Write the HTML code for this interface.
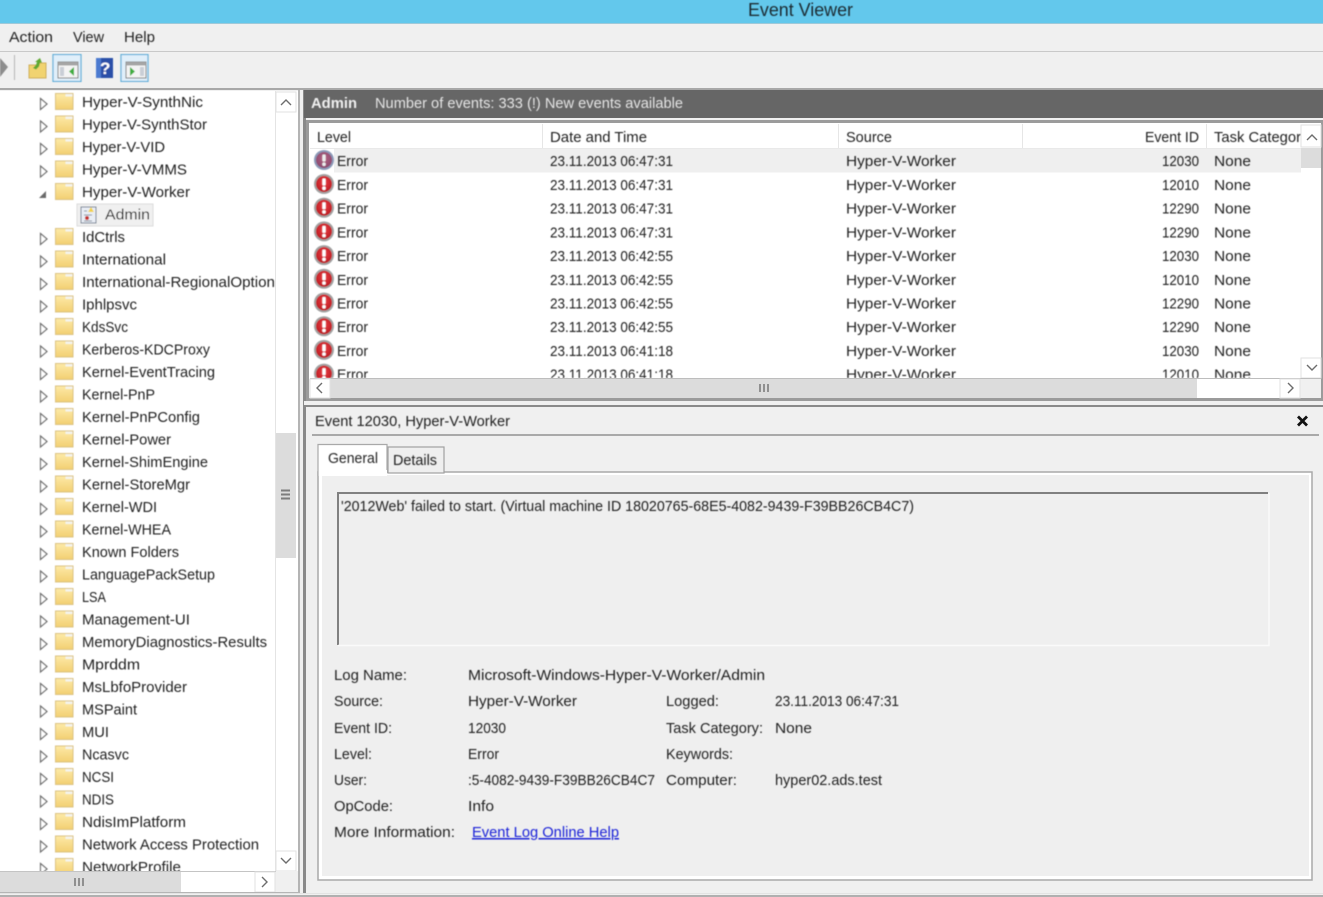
<!DOCTYPE html>
<html><head><meta charset="utf-8"><title>Event Viewer</title>
<style>
html,body{margin:0;padding:0;width:1323px;height:897px;overflow:hidden;background:#f0f0f0}
svg{display:block}
text{font-family:"Liberation Sans",sans-serif;font-size:15px;fill:#222;dominant-baseline:auto}
.b{filter:url(#soft)}
</style></head><body>
<svg width="1323" height="897" viewBox="0 0 1323 897" xmlns="http://www.w3.org/2000/svg">
<defs>
<filter id="soft" x="-2%" y="-2%" width="104%" height="104%"><feGaussianBlur stdDeviation="0.4"/></filter>
<linearGradient id="fg" x1="0" y1="0" x2="0" y2="1"><stop offset="0" stop-color="#fdeaa8"/><stop offset="1" stop-color="#f2cf72"/></linearGradient>
<radialGradient id="er" cx=".5" cy=".4" r=".6"><stop offset="0" stop-color="#ea3c42"/><stop offset="1" stop-color="#bb1c22"/></radialGradient>
<radialGradient id="er2" cx=".5" cy=".4" r=".6"><stop offset="0" stop-color="#b5607f"/><stop offset="1" stop-color="#8a4a70"/></radialGradient>
<g id="folder"><rect x="0.500" y="0.500" width="17.500" height="16" fill="url(#fg)" stroke="#dcc281"/><rect x="10.500" y="1" width="7" height="2.500" fill="#f4f4ee"/></g>
<path id="tri" d="M0.500 0.500L7 6l-6.500 5.500z" fill="#fff" stroke="#6d6d6d" stroke-width="1.200"/>
<g id="err"><circle cx="0" cy="0" r="10" fill="#a2a2a2"/><circle cx="0" cy="0" r="8" fill="url(#er)"/><rect x="-1.700" y="-5.500" width="3.400" height="7" rx="1" fill="#fff"/><circle cx="0" cy="4.200" r="1.800" fill="#fff"/></g>
<clipPath id="treeclip"><rect x="0" y="91" width="275" height="780"/></clipPath>
<clipPath id="listclip"><rect x="310" y="124" width="991" height="254"/></clipPath>
</defs>

<!-- chrome -->
<rect width="1323" height="897" fill="#f0f0f0"/>
<rect width="1323" height="23" fill="#63c8ec"/>
<rect y="23" width="1323" height="1" fill="#9fc9d9"/>
<rect y="51" width="1323" height="1" fill="#c9c9c9"/>
<rect y="88" width="1323" height="2" fill="#a8a8a8"/>

<!-- toolbar -->
<g class="b">
<path d="M0 58l8 9-8 10z" fill="#8d8d8d"/>
<rect x="14" y="55" width="1" height="25" fill="#b5b5b5"/>
<path d="M29 65h8l2-2h7v15H29z" fill="#f1d36f" stroke="#cfae5c"/>
<path d="M33 68l3-3 1-3-2 0 5-4 2 5-2-0.500-1 4-3 3z" fill="#5ea832"/>
<rect x="53" y="54.500" width="28" height="27" fill="#e0effa" stroke="#5eaed9" stroke-width="1.200"/>
<rect x="58" y="62" width="20" height="16" fill="#f4f4f4" stroke="#7b7b7b"/><rect x="58" y="62" width="20" height="3.500" fill="#a5a5a5"/>
<rect x="60" y="67" width="4" height="9" fill="#c9ced6"/><path d="M74 67v9l-5-4.500z" fill="#3fae3f"/>
<rect x="96" y="58" width="17" height="20" fill="#2b4fa8"/><rect x="96" y="58" width="5" height="20" fill="#4c7ad0"/>
<text x="100" y="74" style="font-size:17px;font-weight:bold;fill:#fff">?</text>
<rect x="121" y="54.500" width="27" height="27" fill="#e0effa" stroke="#5eaed9" stroke-width="1.200"/>
<rect x="126" y="62" width="20" height="16" fill="#f4f4f4" stroke="#7b7b7b"/><rect x="126" y="62" width="20" height="3.500" fill="#a5a5a5"/>
<rect x="140" y="67" width="4" height="9" fill="#c9ced6"/><path d="M130 67v9l5-4.500z" fill="#3fae3f"/>
</g>

<!-- tree panel -->
<rect x="0" y="91" width="298" height="802" fill="#fff"/>
<rect x="298" y="90" width="2" height="803" fill="#b4b4b4"/>
<rect x="303" y="90" width="3" height="803" fill="#8a8a8a"/>
<rect x="275" y="91" width="1" height="780" fill="#e4e4e4"/>
<rect x="276" y="92" width="20" height="20" fill="#fff" stroke="#e2e2e2"/>
<path d="M281 105l5-5 5 5" fill="none" stroke="#6d6d6d" stroke-width="1.400"/>
<rect x="276" y="433" width="20" height="125" fill="#dcdcdc"/>
<path d="M281 490.500h9M281 494.500h9M281 498.500h9" stroke="#7d7d7d" stroke-width="2"/>
<rect x="276" y="851" width="20" height="20" fill="#fff" stroke="#e2e2e2"/>
<path d="M281 858l5 5 5-5" fill="none" stroke="#6d6d6d" stroke-width="1.400"/>
<rect x="0" y="871" width="298" height="21" fill="#f0f0f0"/>
<rect x="0" y="871" width="276" height="1" fill="#c4c4c4"/>
<rect x="0" y="872" width="181" height="20" fill="#dcdcdc"/>
<rect x="181" y="872" width="74" height="20" fill="#fff"/>
<rect x="255" y="872" width="20" height="20" fill="#fff" stroke="#e2e2e2"/>
<path d="M262 877l5 5-5 5" fill="none" stroke="#6d6d6d" stroke-width="1.400"/>
<path d="M75 878v8M79 878v8M83 878v8" stroke="#7d7d7d" stroke-width="1.600"/>
<rect x="0" y="892" width="298" height="1" fill="#b5b5b5"/>

<g clip-path="url(#treeclip)">
<g class="b">
<rect x="77" y="204" width="76" height="22" fill="#f0f0f0" stroke="#dcdcdc"/>
<g>
<use href="#tri" x="40" y="98"/><use href="#folder" x="55" y="93"/>
<use href="#tri" x="40" y="120.500"/><use href="#folder" x="55" y="115.500"/>
<use href="#tri" x="40" y="143"/><use href="#folder" x="55" y="138"/>
<use href="#tri" x="40" y="165.500"/><use href="#folder" x="55" y="160.500"/>
<path d="M39 198l7-7v7z" fill="#6a6a6a"/><use href="#folder" x="55" y="183"/>
<rect x="81" y="207" width="15" height="16" fill="#e9eef5" stroke="#6f7e92"/><path d="M91 207l-3 5h6z" fill="#f2d24c"/><circle cx="87" cy="218" r="2" fill="#c5332f"/><path d="M84 211h3M84 215h8M84 221h8" stroke="#8a94a3"/>
<use href="#tri" x="40" y="233"/><use href="#folder" x="55" y="228"/>
<use href="#tri" x="40" y="255.500"/><use href="#folder" x="55" y="250.500"/>
<use href="#tri" x="40" y="278"/><use href="#folder" x="55" y="273"/>
<use href="#tri" x="40" y="300.500"/><use href="#folder" x="55" y="295.500"/>
<use href="#tri" x="40" y="323"/><use href="#folder" x="55" y="318"/>
<use href="#tri" x="40" y="345.500"/><use href="#folder" x="55" y="340.500"/>
<use href="#tri" x="40" y="368"/><use href="#folder" x="55" y="363"/>
<use href="#tri" x="40" y="390.500"/><use href="#folder" x="55" y="385.500"/>
<use href="#tri" x="40" y="413"/><use href="#folder" x="55" y="408"/>
<use href="#tri" x="40" y="435.500"/><use href="#folder" x="55" y="430.500"/>
<use href="#tri" x="40" y="458"/><use href="#folder" x="55" y="453"/>
<use href="#tri" x="40" y="480.500"/><use href="#folder" x="55" y="475.500"/>
<use href="#tri" x="40" y="503"/><use href="#folder" x="55" y="498"/>
<use href="#tri" x="40" y="525.500"/><use href="#folder" x="55" y="520.500"/>
<use href="#tri" x="40" y="548"/><use href="#folder" x="55" y="543"/>
<use href="#tri" x="40" y="570.500"/><use href="#folder" x="55" y="565.500"/>
<use href="#tri" x="40" y="593"/><use href="#folder" x="55" y="588"/>
<use href="#tri" x="40" y="615.500"/><use href="#folder" x="55" y="610.500"/>
<use href="#tri" x="40" y="638"/><use href="#folder" x="55" y="633"/>
<use href="#tri" x="40" y="660.500"/><use href="#folder" x="55" y="655.500"/>
<use href="#tri" x="40" y="683"/><use href="#folder" x="55" y="678"/>
<use href="#tri" x="40" y="705.500"/><use href="#folder" x="55" y="700.500"/>
<use href="#tri" x="40" y="728"/><use href="#folder" x="55" y="723"/>
<use href="#tri" x="40" y="750.500"/><use href="#folder" x="55" y="745.500"/>
<use href="#tri" x="40" y="773"/><use href="#folder" x="55" y="768"/>
<use href="#tri" x="40" y="795.500"/><use href="#folder" x="55" y="790.500"/>
<use href="#tri" x="40" y="818"/><use href="#folder" x="55" y="813"/>
<use href="#tri" x="40" y="840.500"/><use href="#folder" x="55" y="835.500"/>
<use href="#tri" x="40" y="863"/><use href="#folder" x="55" y="858"/>
</g>
<text x="82" y="107" textLength="121" lengthAdjust="spacingAndGlyphs">Hyper-V-SynthNic</text>
<text x="82" y="129.500" textLength="125" lengthAdjust="spacingAndGlyphs">Hyper-V-SynthStor</text>
<text x="82" y="152" textLength="83" lengthAdjust="spacingAndGlyphs">Hyper-V-VID</text>
<text x="82" y="174.500" textLength="105" lengthAdjust="spacingAndGlyphs">Hyper-V-VMMS</text>
<text x="82" y="197" textLength="108" lengthAdjust="spacingAndGlyphs">Hyper-V-Worker</text>
<text x="105" y="219.500" textLength="45" lengthAdjust="spacingAndGlyphs">Admin</text>
<text x="82" y="242" textLength="43" lengthAdjust="spacingAndGlyphs">IdCtrls</text>
<text x="82" y="264.500" textLength="84" lengthAdjust="spacingAndGlyphs">International</text>
<text x="82" y="287" textLength="193" lengthAdjust="spacingAndGlyphs">International-RegionalOption</text>
<text x="82" y="309.500" textLength="55" lengthAdjust="spacingAndGlyphs">Iphlpsvc</text>
<text x="82" y="332" textLength="46" lengthAdjust="spacingAndGlyphs">KdsSvc</text>
<text x="82" y="354.500" textLength="128" lengthAdjust="spacingAndGlyphs">Kerberos-KDCProxy</text>
<text x="82" y="377" textLength="133" lengthAdjust="spacingAndGlyphs">Kernel-EventTracing</text>
<text x="82" y="399.500" textLength="73" lengthAdjust="spacingAndGlyphs">Kernel-PnP</text>
<text x="82" y="422" textLength="118" lengthAdjust="spacingAndGlyphs">Kernel-PnPConfig</text>
<text x="82" y="444.500" textLength="89" lengthAdjust="spacingAndGlyphs">Kernel-Power</text>
<text x="82" y="467" textLength="126" lengthAdjust="spacingAndGlyphs">Kernel-ShimEngine</text>
<text x="82" y="489.500" textLength="108" lengthAdjust="spacingAndGlyphs">Kernel-StoreMgr</text>
<text x="82" y="512" textLength="75" lengthAdjust="spacingAndGlyphs">Kernel-WDI</text>
<text x="82" y="534.500" textLength="89" lengthAdjust="spacingAndGlyphs">Kernel-WHEA</text>
<text x="82" y="557" textLength="97" lengthAdjust="spacingAndGlyphs">Known Folders</text>
<text x="82" y="579.500" textLength="133" lengthAdjust="spacingAndGlyphs">LanguagePackSetup</text>
<text x="82" y="602" textLength="24" lengthAdjust="spacingAndGlyphs">LSA</text>
<text x="82" y="624.500" textLength="108" lengthAdjust="spacingAndGlyphs">Management-UI</text>
<text x="82" y="647" textLength="185" lengthAdjust="spacingAndGlyphs">MemoryDiagnostics-Results</text>
<text x="82" y="669.500" textLength="58" lengthAdjust="spacingAndGlyphs">Mprddm</text>
<text x="82" y="692" textLength="105" lengthAdjust="spacingAndGlyphs">MsLbfoProvider</text>
<text x="82" y="714.500" textLength="55" lengthAdjust="spacingAndGlyphs">MSPaint</text>
<text x="82" y="737" textLength="27" lengthAdjust="spacingAndGlyphs">MUI</text>
<text x="82" y="759.500" textLength="47" lengthAdjust="spacingAndGlyphs">Ncasvc</text>
<text x="82" y="782" textLength="32" lengthAdjust="spacingAndGlyphs">NCSI</text>
<text x="82" y="804.500" textLength="32" lengthAdjust="spacingAndGlyphs">NDIS</text>
<text x="82" y="827" textLength="104" lengthAdjust="spacingAndGlyphs">NdisImPlatform</text>
<text x="82" y="849.500" textLength="177" lengthAdjust="spacingAndGlyphs">Network Access Protection</text>
<text x="82" y="872" textLength="99" lengthAdjust="spacingAndGlyphs">NetworkProfile</text>
</g></g>

<!-- dark header -->
<rect x="304" y="90" width="1019" height="28" fill="#666"/>
<g class="b">
<text x="311" y="108" textLength="46" lengthAdjust="spacingAndGlyphs" style="font-weight:bold;fill:#f0f0f0">Admin</text>
<text x="375" y="108" textLength="308" lengthAdjust="spacingAndGlyphs" style="fill:#e4e4e4">Number of events: 333 (!) New events available</text>
</g>

<!-- event list -->
<rect x="306" y="120" width="1017" height="281" fill="#9b9b9b"/>
<rect x="309" y="123" width="1012" height="275" fill="#fff"/>
<path d="M542.500 124v24M838.500 124v24M1022.500 124v24M1206.500 124v24" stroke="#e6e6e6"/>
<rect x="310" y="148" width="991" height="1" fill="#e9e9e9"/>
<rect x="334" y="149" width="967" height="23.500" fill="#efefef"/>
<g class="b">
<text x="317" y="142" textLength="34" lengthAdjust="spacingAndGlyphs">Level</text>
<text x="550" y="142" textLength="97" lengthAdjust="spacingAndGlyphs">Date and Time</text>
<text x="846" y="142" textLength="46" lengthAdjust="spacingAndGlyphs">Source</text>
<text x="1145" y="142" textLength="54" lengthAdjust="spacingAndGlyphs">Event ID</text>
<text x="1214" y="142" textLength="87" lengthAdjust="spacingAndGlyphs">Task Categor</text>
<g clip-path="url(#listclip)">
<g><circle cx="324" cy="160" r="10" fill="#8b9ab8"/><circle cx="324" cy="160" r="8" fill="url(#er2)"/><rect x="322.300" y="154.500" width="3.400" height="7" rx="1" fill="#eee"/><circle cx="324" cy="164.200" r="1.800" fill="#eee"/></g>
<use href="#err" x="324" y="184"/><use href="#err" x="324" y="207.700"/><use href="#err" x="324" y="231.400"/><use href="#err" x="324" y="255.100"/><use href="#err" x="324" y="278.800"/><use href="#err" x="324" y="302.500"/><use href="#err" x="324" y="326.200"/><use href="#err" x="324" y="349.900"/><use href="#err" x="324" y="373.600"/>

<text x="337" y="166" textLength="31" lengthAdjust="spacingAndGlyphs">Error</text><text x="550" y="166" textLength="123" lengthAdjust="spacingAndGlyphs">23.11.2013 06:47:31</text><text x="846" y="166" textLength="110" lengthAdjust="spacingAndGlyphs">Hyper-V-Worker</text><text x="1162" y="166" textLength="37" lengthAdjust="spacingAndGlyphs">12030</text><text x="1214" y="166" textLength="37" lengthAdjust="spacingAndGlyphs">None</text>
<text x="337" y="190" textLength="31" lengthAdjust="spacingAndGlyphs">Error</text><text x="550" y="190" textLength="123" lengthAdjust="spacingAndGlyphs">23.11.2013 06:47:31</text><text x="846" y="190" textLength="110" lengthAdjust="spacingAndGlyphs">Hyper-V-Worker</text><text x="1162" y="190" textLength="37" lengthAdjust="spacingAndGlyphs">12010</text><text x="1214" y="190" textLength="37" lengthAdjust="spacingAndGlyphs">None</text>
<text x="337" y="213.700" textLength="31" lengthAdjust="spacingAndGlyphs">Error</text><text x="550" y="213.700" textLength="123" lengthAdjust="spacingAndGlyphs">23.11.2013 06:47:31</text><text x="846" y="213.700" textLength="110" lengthAdjust="spacingAndGlyphs">Hyper-V-Worker</text><text x="1162" y="213.700" textLength="37" lengthAdjust="spacingAndGlyphs">12290</text><text x="1214" y="213.700" textLength="37" lengthAdjust="spacingAndGlyphs">None</text>
<text x="337" y="237.400" textLength="31" lengthAdjust="spacingAndGlyphs">Error</text><text x="550" y="237.400" textLength="123" lengthAdjust="spacingAndGlyphs">23.11.2013 06:47:31</text><text x="846" y="237.400" textLength="110" lengthAdjust="spacingAndGlyphs">Hyper-V-Worker</text><text x="1162" y="237.400" textLength="37" lengthAdjust="spacingAndGlyphs">12290</text><text x="1214" y="237.400" textLength="37" lengthAdjust="spacingAndGlyphs">None</text>
<text x="337" y="261.100" textLength="31" lengthAdjust="spacingAndGlyphs">Error</text><text x="550" y="261.100" textLength="123" lengthAdjust="spacingAndGlyphs">23.11.2013 06:42:55</text><text x="846" y="261.100" textLength="110" lengthAdjust="spacingAndGlyphs">Hyper-V-Worker</text><text x="1162" y="261.100" textLength="37" lengthAdjust="spacingAndGlyphs">12030</text><text x="1214" y="261.100" textLength="37" lengthAdjust="spacingAndGlyphs">None</text>
<text x="337" y="284.800" textLength="31" lengthAdjust="spacingAndGlyphs">Error</text><text x="550" y="284.800" textLength="123" lengthAdjust="spacingAndGlyphs">23.11.2013 06:42:55</text><text x="846" y="284.800" textLength="110" lengthAdjust="spacingAndGlyphs">Hyper-V-Worker</text><text x="1162" y="284.800" textLength="37" lengthAdjust="spacingAndGlyphs">12010</text><text x="1214" y="284.800" textLength="37" lengthAdjust="spacingAndGlyphs">None</text>
<text x="337" y="308.500" textLength="31" lengthAdjust="spacingAndGlyphs">Error</text><text x="550" y="308.500" textLength="123" lengthAdjust="spacingAndGlyphs">23.11.2013 06:42:55</text><text x="846" y="308.500" textLength="110" lengthAdjust="spacingAndGlyphs">Hyper-V-Worker</text><text x="1162" y="308.500" textLength="37" lengthAdjust="spacingAndGlyphs">12290</text><text x="1214" y="308.500" textLength="37" lengthAdjust="spacingAndGlyphs">None</text>
<text x="337" y="332.200" textLength="31" lengthAdjust="spacingAndGlyphs">Error</text><text x="550" y="332.200" textLength="123" lengthAdjust="spacingAndGlyphs">23.11.2013 06:42:55</text><text x="846" y="332.200" textLength="110" lengthAdjust="spacingAndGlyphs">Hyper-V-Worker</text><text x="1162" y="332.200" textLength="37" lengthAdjust="spacingAndGlyphs">12290</text><text x="1214" y="332.200" textLength="37" lengthAdjust="spacingAndGlyphs">None</text>
<text x="337" y="355.900" textLength="31" lengthAdjust="spacingAndGlyphs">Error</text><text x="550" y="355.900" textLength="123" lengthAdjust="spacingAndGlyphs">23.11.2013 06:41:18</text><text x="846" y="355.900" textLength="110" lengthAdjust="spacingAndGlyphs">Hyper-V-Worker</text><text x="1162" y="355.900" textLength="37" lengthAdjust="spacingAndGlyphs">12030</text><text x="1214" y="355.900" textLength="37" lengthAdjust="spacingAndGlyphs">None</text>
<text x="337" y="379.600" textLength="31" lengthAdjust="spacingAndGlyphs">Error</text><text x="550" y="379.600" textLength="123" lengthAdjust="spacingAndGlyphs">23.11.2013 06:41:18</text><text x="846" y="379.600" textLength="110" lengthAdjust="spacingAndGlyphs">Hyper-V-Worker</text><text x="1162" y="379.600" textLength="37" lengthAdjust="spacingAndGlyphs">12010</text><text x="1214" y="379.600" textLength="37" lengthAdjust="spacingAndGlyphs">None</text>
</g></g>
<!-- list scrollbars -->
<rect x="1301" y="124" width="20" height="254" fill="#fff"/>
<rect x="1301" y="125" width="20" height="22" fill="#fff" stroke="#e2e2e2"/>
<path d="M1307 140l5-5 5 5" fill="none" stroke="#6d6d6d" stroke-width="1.400"/>
<rect x="1301" y="148" width="20" height="20" fill="#dcdcdc"/>
<rect x="1301" y="358" width="20" height="20" fill="#fff" stroke="#e2e2e2"/>
<path d="M1307 365l5 5 5-5" fill="none" stroke="#6d6d6d" stroke-width="1.400"/>
<rect x="310" y="378" width="1011" height="1" fill="#bdbdbd"/>
<rect x="309" y="379" width="1012" height="19" fill="#f0f0f0"/>
<rect x="330" y="379" width="867" height="19" fill="#dcdcdc"/>
<rect x="1197" y="379" width="83" height="19" fill="#fff"/>
<rect x="310" y="379" width="20" height="19" fill="#fff" stroke="#e2e2e2"/>
<path d="M322 383l-5 5 5 5" fill="none" stroke="#6d6d6d" stroke-width="1.400"/>
<rect x="1280" y="379" width="20" height="19" fill="#fff" stroke="#e2e2e2"/>
<path d="M1288 383l5 5-5 5" fill="none" stroke="#6d6d6d" stroke-width="1.400"/>
<path d="M760 384v8M764 384v8M768 384v8" stroke="#7d7d7d" stroke-width="1.600"/>

<!-- detail pane -->
<rect x="304" y="401" width="1019" height="4" fill="#f0f0f0"/>
<rect x="306" y="405" width="1017" height="2" fill="#8a8a8a"/>
<rect x="312" y="434" width="1007" height="2" fill="#a9a9a9"/>
<rect x="318" y="472" width="994" height="408" fill="#fff" stroke="#a9a9a9" stroke-width="1.500"/>
<rect x="322" y="475" width="987" height="401" fill="#efefef"/>
<rect x="388" y="447" width="56" height="26" fill="#efefef" stroke="#a0a0a0" stroke-width="1.200"/>
<path d="M318 476V444.500H387V473" fill="#fff" stroke="#a9a9a9" stroke-width="1.200"/>
<rect x="319" y="470" width="68" height="6" fill="#fff"/>
<rect x="337" y="492" width="932" height="153" fill="#efefef"/>
<path d="M338 645V493H1268" fill="none" stroke="#808080" stroke-width="2"/>
<path d="M1269 493V645.500H338" fill="none" stroke="#fafafa" stroke-width="1.500"/>
<path d="M1298 416.500l9 9M1307 416.500l-9 9" stroke="#111" stroke-width="2.800"/>
<g class="b">
<text x="315" y="426" textLength="195" lengthAdjust="spacingAndGlyphs">Event 12030, Hyper-V-Worker</text>
<text x="328" y="463" textLength="50" lengthAdjust="spacingAndGlyphs">General</text>
<text x="393" y="465" textLength="44" lengthAdjust="spacingAndGlyphs">Details</text>
<text x="341" y="511" textLength="573" lengthAdjust="spacingAndGlyphs">'2012Web' failed to start. (Virtual machine ID 18020765-68E5-4082-9439-F39BB26CB4C7)</text>
<text x="334" y="680" textLength="73" lengthAdjust="spacingAndGlyphs">Log Name:</text>
<text x="468" y="680" textLength="297" lengthAdjust="spacingAndGlyphs">Microsoft-Windows-Hyper-V-Worker/Admin</text>
<text x="334" y="706" textLength="49" lengthAdjust="spacingAndGlyphs">Source:</text>
<text x="468" y="706" textLength="109" lengthAdjust="spacingAndGlyphs">Hyper-V-Worker</text>
<text x="666" y="706" textLength="53" lengthAdjust="spacingAndGlyphs">Logged:</text>
<text x="775" y="706" textLength="124" lengthAdjust="spacingAndGlyphs">23.11.2013 06:47:31</text>
<text x="334" y="733" textLength="58" lengthAdjust="spacingAndGlyphs">Event ID:</text>
<text x="468" y="733" textLength="38" lengthAdjust="spacingAndGlyphs">12030</text>
<text x="666" y="733" textLength="97" lengthAdjust="spacingAndGlyphs">Task Category:</text>
<text x="775" y="733" textLength="37" lengthAdjust="spacingAndGlyphs">None</text>
<text x="334" y="759" textLength="38" lengthAdjust="spacingAndGlyphs">Level:</text>
<text x="468" y="759" textLength="31" lengthAdjust="spacingAndGlyphs">Error</text>
<text x="666" y="759" textLength="67" lengthAdjust="spacingAndGlyphs">Keywords:</text>
<text x="334" y="785" textLength="33" lengthAdjust="spacingAndGlyphs">User:</text>
<text x="468" y="785" textLength="187" lengthAdjust="spacingAndGlyphs">:5-4082-9439-F39BB26CB4C7</text>
<text x="666" y="785" textLength="71" lengthAdjust="spacingAndGlyphs">Computer:</text>
<text x="775" y="785" textLength="107" lengthAdjust="spacingAndGlyphs">hyper02.ads.test</text>
<text x="334" y="811" textLength="59" lengthAdjust="spacingAndGlyphs">OpCode:</text>
<text x="468" y="811" textLength="26" lengthAdjust="spacingAndGlyphs">Info</text>
<text x="334" y="837" textLength="121" lengthAdjust="spacingAndGlyphs">More Information:</text>
<text x="472" y="837" textLength="147" lengthAdjust="spacingAndGlyphs" style="fill:#1a22d8;text-decoration:underline">Event Log Online Help</text>
<text x="748" y="16" textLength="105" lengthAdjust="spacingAndGlyphs" style="font-size:18px;fill:#1c2c33">Event Viewer</text>
<text x="9" y="42" textLength="44" lengthAdjust="spacingAndGlyphs">Action</text>
<text x="73" y="42" textLength="31" lengthAdjust="spacingAndGlyphs">View</text>
<text x="124" y="42" textLength="31" lengthAdjust="spacingAndGlyphs">Help</text>
</g>

<!-- bottom -->
<rect x="0" y="893" width="1323" height="1" fill="#e3e3e3"/>
<rect x="0" y="895" width="1323" height="2" fill="#b0b0b0"/>
</svg>
</body></html>
